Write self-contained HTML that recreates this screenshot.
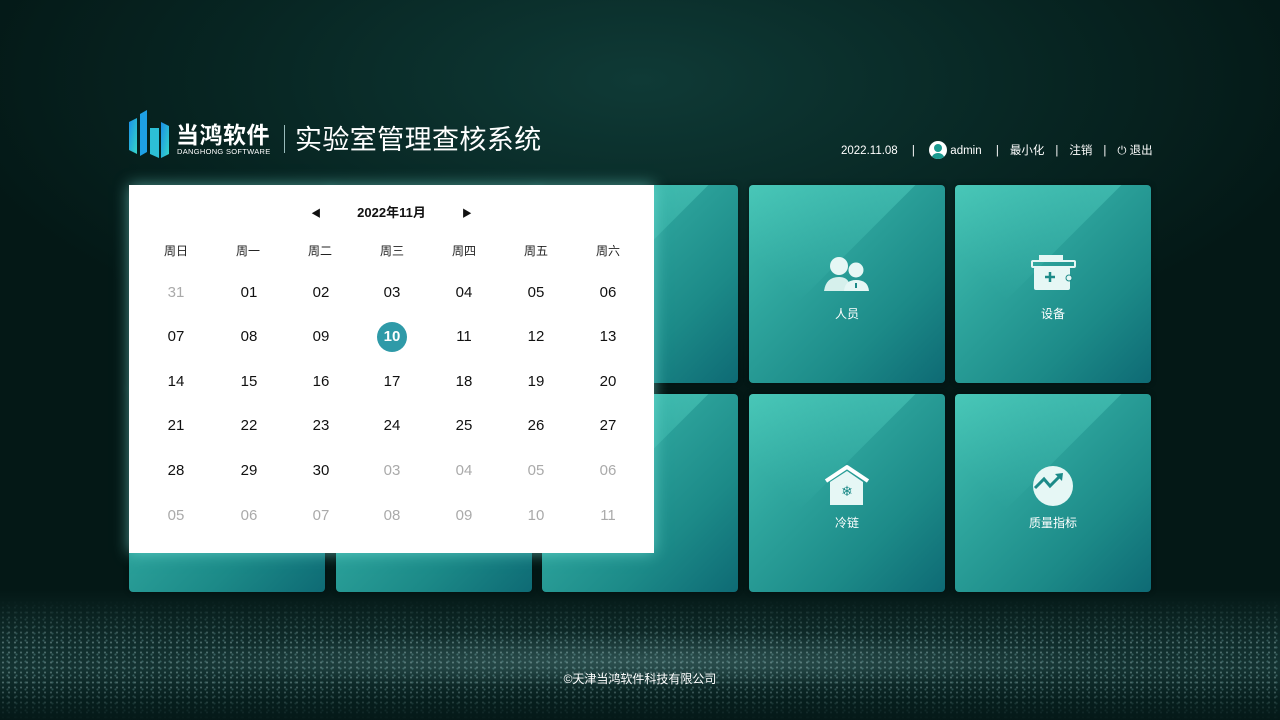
<!DOCTYPE html>
<html><head><meta charset="utf-8"><style>
*{margin:0;padding:0;box-sizing:border-box}
body{width:1280px;height:720px;overflow:hidden;position:relative;font-family:"Liberation Sans","Noto Sans CJK SC",sans-serif;
background:radial-gradient(ellipse 700px 300px at 640px 80px,#0f3a36 0%,#072522 60%,#041816 100%);}
.glit{position:absolute;left:0;top:590px;width:1280px;height:130px;
background:
radial-gradient(ellipse 700px 40px at 640px 70px,rgba(120,170,170,.25),rgba(0,0,0,0) 70%),
linear-gradient(180deg,rgba(10,40,40,0) 0%,rgba(30,70,70,.45) 40%,rgba(40,85,85,.45) 60%,rgba(10,40,40,.4) 85%,rgba(5,25,25,.6) 100%);}
.dots{position:absolute;left:0;top:600px;width:1280px;height:120px;opacity:.35;
background-image:radial-gradient(circle,rgba(200,235,235,.9) 0.8px,transparent 1.3px),radial-gradient(circle,rgba(150,210,210,.8) 0.8px,transparent 1.3px);
background-size:6px 5px,9px 7px;background-position:0 0,3px 2px;
-webkit-mask-image:linear-gradient(180deg,transparent,#000 35%,#000 70%,transparent);}
.tile{position:absolute;width:196px;height:198px;border-radius:4px;
background:linear-gradient(135deg,#45c3b4 0%,#2ea59d 35%,#1c8a88 70%,#0e6a74 100%);box-shadow:0 0 6px rgba(0,0,0,.4);overflow:hidden}
.tile:before{content:"";position:absolute;left:-40px;top:-150px;width:200px;height:230px;background:linear-gradient(180deg,rgba(120,255,230,.35),rgba(120,255,230,0));transform:rotate(45deg);}
.tile .lb{position:absolute;left:0;right:0;top:120px;text-align:center;color:#fff;font-size:12px}
.tile svg{position:absolute;left:74px;top:70px}
.hdr{position:absolute;color:#fff}
.cal{position:absolute;left:129px;top:185px;width:525px;height:368px;background:#fff;box-shadow:0 0 14px rgba(120,230,220,.6)}
.cal .c{position:absolute;width:40px;margin-left:-20px;text-align:center;font-size:15px;color:#111}
.cal .g{color:#aaa}
.cal .w{font-size:12px;color:#222}
</style></head><body>
<div class="glit"></div><div class="dots"></div>

<svg style="position:absolute;left:127px;top:110px" width="44" height="50" viewBox="0 0 44 50">
<defs><linearGradient id="lg" x1="0" y1="0" x2="1" y2="1"><stop offset="0" stop-color="#1b8fe8"/><stop offset="1" stop-color="#35d6c8"/></linearGradient></defs>
<path d="M2 12 L10 8 V44 L2 40Z" fill="url(#lg)"/><path d="M13 4 L20 0 V42 L13 46Z" fill="#1ea0e6"/>
<path d="M23 18 H32 V48 L23 44Z" fill="#2cbfd6"/><path d="M34 12 L42 16 V44 L34 48Z" fill="url(#lg)"/></svg>
<div class="hdr" style="left:176px;top:116px;font-size:23px;font-weight:bold;letter-spacing:.5px">当鸿软件</div>
<div class="hdr" style="left:177px;top:147px;font-size:7.5px;letter-spacing:.3px">DANGHONG SOFTWARE</div>
<div style="position:absolute;left:284px;top:125px;width:1px;height:28px;background:#9bb"></div>
<div class="hdr" style="left:295px;top:118px;font-size:27px;letter-spacing:.4px">实验室管理查核系统</div>

<div class="hdr" style="left:841px;top:141px;font-size:11.5px;white-space:nowrap">2022.11.08 <span style="margin:0 11px">|</span>
<span style="display:inline-block;width:18px;height:18px;border-radius:50%;background:#fff;vertical-align:-5px;position:relative;overflow:hidden"><span style="position:absolute;left:5px;top:3px;width:8px;height:8px;border-radius:50%;background:#1a9a90"></span><span style="position:absolute;left:2px;top:12px;width:14px;height:10px;border-radius:7px 7px 0 0;background:#1a9a90"></span></span>
 admin <span style="margin:0 11px">|</span>最小化<span style="margin:0 11px">|</span>注销<span style="margin:0 11px">|</span>⏻ 退出</div>

<div class="tile" style="left:129px;top:185px"></div>
<div class="tile" style="left:336px;top:185px"></div>
<div class="tile" style="left:542px;top:185px"></div>
<div class="tile" style="left:749px;top:185px"><svg width="48" height="40" viewBox="0 0 48 40"><circle cx="16" cy="11" r="9" fill="#e6f7f5"/><circle cx="33" cy="15" r="7.5" fill="#e6f7f5"/><path d="M1 36 Q3 22 16 22 Q24 22 26 28 Q22 30 22 36Z" fill="#d6f0ec"/><path d="M21 36 Q22 25 33 25 Q45 25 46 36Z" fill="#e6f7f5"/><rect x="32" y="28" width="2" height="5" fill="#1c8a88"/></svg><div class="lb">人员</div></div>
<div class="tile" style="left:955px;top:185px"><svg width="48" height="40" viewBox="0 0 48 40"><rect x="10" y="0" width="24" height="6" fill="#e6f7f5"/><rect x="3" y="6" width="43" height="6" rx="1" fill="none" stroke="#e6f7f5" stroke-width="2"/><rect x="5" y="12" width="36" height="23" rx="2" fill="#e6f7f5"/><path d="M21 17v10M16 22h10" stroke="#1c8a88" stroke-width="2.5"/><circle cx="40" cy="23" r="3" fill="#e6f7f5" stroke="#1c8a88"/></svg><div class="lb">设备</div></div>
<div class="tile" style="left:129px;top:394px"></div>
<div class="tile" style="left:336px;top:394px"></div>
<div class="tile" style="left:542px;top:394px"><div class="lb" style="left:100px;text-align:left">理</div></div>
<div class="tile" style="left:749px;top:394px"><svg width="48" height="44" viewBox="0 0 48 44"><path d="M3 17 L24 3 L45 17" fill="none" stroke="#fff" stroke-width="4" stroke-linejoin="round"/><path d="M7 18 L24 7 L40 18 V41 H7Z" fill="#e6f7f5"/><text x="24" y="32" font-size="14" text-anchor="middle" fill="#1c8a88">❄</text></svg><div class="lb">冷链</div></div>
<div class="tile" style="left:955px;top:394px"><svg width="48" height="44" viewBox="0 0 48 44"><circle cx="24" cy="22" r="20" fill="#e6f7f5"/><path d="M6 24 L15 15 L21 22 L31 12" fill="none" stroke="#1c8a88" stroke-width="3"/><path d="M26 10 L34 9 L33 17Z" fill="#1c8a88"/></svg><div class="lb">质量指标</div></div>

<div class="cal">
<div style="position:absolute;left:0;right:0;top:17px;text-align:center;font-size:13px;font-weight:bold;color:#111">
<span style="font-size:10px;margin-right:36px">◀</span>2022年11月<span style="font-size:10px;margin-left:36px">▶</span></div>
<div class="c w" style="left:47px;top:57px">周日</div><div class="c w" style="left:119px;top:57px">周一</div><div class="c w" style="left:191px;top:57px">周二</div><div class="c w" style="left:263px;top:57px">周三</div><div class="c w" style="left:335px;top:57px">周四</div><div class="c w" style="left:407px;top:57px">周五</div><div class="c w" style="left:479px;top:57px">周六</div>

<div class="c g" style="left:47px;top:99px">31</div><div class="c" style="left:120px;top:99px">01</div><div class="c" style="left:192px;top:99px">02</div><div class="c" style="left:263px;top:99px">03</div><div class="c" style="left:335px;top:99px">04</div><div class="c" style="left:407px;top:99px">05</div><div class="c" style="left:479px;top:99px">06</div>
<div class="c" style="left:47px;top:143px">07</div><div class="c" style="left:120px;top:143px">08</div><div class="c" style="left:192px;top:143px">09</div>
<div style="position:absolute;left:248px;top:137px;width:30px;height:30px;border-radius:50%;background:#2f9aa8;color:#fff;font-weight:bold;font-size:15px;text-align:center;line-height:30px">10</div>
<div class="c" style="left:335px;top:143px">11</div><div class="c" style="left:407px;top:143px">12</div><div class="c" style="left:479px;top:143px">13</div>
<div class="c" style="left:47px;top:188px">14</div><div class="c" style="left:120px;top:188px">15</div><div class="c" style="left:192px;top:188px">16</div><div class="c" style="left:263px;top:188px">17</div><div class="c" style="left:335px;top:188px">18</div><div class="c" style="left:407px;top:188px">19</div><div class="c" style="left:479px;top:188px">20</div>
<div class="c" style="left:47px;top:232px">21</div><div class="c" style="left:120px;top:232px">22</div><div class="c" style="left:192px;top:232px">23</div><div class="c" style="left:263px;top:232px">24</div><div class="c" style="left:335px;top:232px">25</div><div class="c" style="left:407px;top:232px">26</div><div class="c" style="left:479px;top:232px">27</div>
<div class="c" style="left:47px;top:277px">28</div><div class="c" style="left:120px;top:277px">29</div><div class="c" style="left:192px;top:277px">30</div><div class="c g" style="left:263px;top:277px">03</div><div class="c g" style="left:335px;top:277px">04</div><div class="c g" style="left:407px;top:277px">05</div><div class="c g" style="left:479px;top:277px">06</div>
<div class="c g" style="left:47px;top:322px">05</div><div class="c g" style="left:120px;top:322px">06</div><div class="c g" style="left:192px;top:322px">07</div><div class="c g" style="left:263px;top:322px">08</div><div class="c g" style="left:335px;top:322px">09</div><div class="c g" style="left:407px;top:322px">10</div><div class="c g" style="left:479px;top:322px">11</div>
</div>

<div class="hdr" style="left:0;width:1280px;text-align:center;top:670px;font-size:12px">©天津当鸿软件科技有限公司</div>
</body></html>
